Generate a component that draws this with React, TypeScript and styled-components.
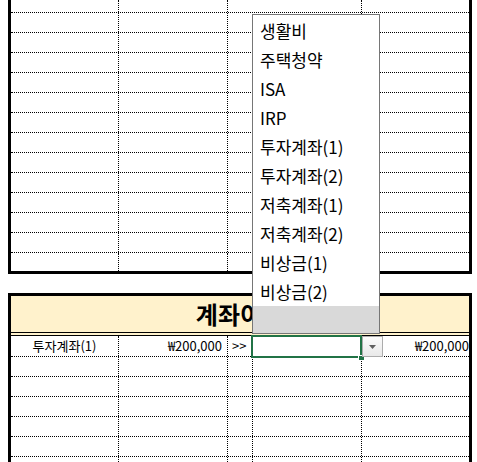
import React from 'react';
import styled, { createGlobalStyle } from 'styled-components';

const GlobalStyle = createGlobalStyle`
    html, body {
        margin: 0;
        padding: 0;
        background: #fff;
    }
    body {
        font-family: "Noto Sans CJK KR", "Noto Sans", sans-serif;
        color: #000;
    }
`;

// Sheet area
const Sheet = styled.div`
    position: relative;
    width: 477px;
    height: 462px;
    overflow: hidden;
    padding-left: 8px;
    box-sizing: border-box;
`;

const Table = styled.div<{ $closedTop?: boolean; $closedBottom?: boolean }>`
    width: 464px;
    box-sizing: border-box;
    border-left: 3px solid #000;
    border-right: 3px solid #000;
    border-top: ${p => (p.$closedTop ? '3px solid #000' : 'none')};
    border-bottom: ${p => (p.$closedBottom ? '3px solid #000' : 'none')};
`;

const Gap = styled.div`
    height: 19px;
`;

const Row = styled.div<{ $cols: string; $h?: number; $noLine?: boolean }>`
    display: grid;
    grid-template-columns: ${p => p.$cols};
    height: ${p => p.$h ?? 20}px;
    box-sizing: border-box;
    border-bottom: ${p => (p.$noLine ? 'none' : '1px dotted #000')};
`;

const Cell = styled.div<{ $align?: 'left' | 'center' | 'right'; $pad?: number }>`
    border-right: 1px dotted #000;
    font-size: 13px;
    line-height: 19px;
    white-space: nowrap;
    overflow: hidden;
    text-align: ${p => p.$align ?? 'left'};
    padding: 0 ${p => (p.$align === 'right' ? p.$pad ?? 5 : 0)}px 0 ${p => (p.$align === 'left' ? p.$pad ?? 4 : 0)}px;

    &:last-child {
        border-right: none;
    }
`;

const Header = styled.div`
    height: 40px;
    box-sizing: border-box;
    background: #fff2cc;
    border-bottom: 4px double #000;
    display: flex;
    align-items: center;
    justify-content: center;
    font-size: 24px;
    font-weight: 700;
    line-height: 36px;
`;

// Overlays (selection, list button, list)
const Selection = styled.div`
    position: absolute;
    left: 251px;
    top: 335px;
    width: 111px;
    height: 23px;
    box-sizing: border-box;
    border: 2px solid #217346;

    &::after {
        content: '';
        position: absolute;
        right: -4px;
        bottom: -4px;
        width: 5px;
        height: 4px;
        background: #217346;
        border-left: 1px solid #fff;
        border-top: 1px solid #fff;
    }
`;

const ListButton = styled.div`
    position: absolute;
    left: 362px;
    top: 336px;
    width: 21px;
    height: 21px;
    box-sizing: border-box;
    border: 1px solid #acacac;
    background: linear-gradient(#fbfbfb, #e9e9e9);
    display: flex;
    align-items: center;
    justify-content: center;
`;

const ListBox = styled.div`
    position: absolute;
    left: 252px;
    top: 14px;
    width: 128px;
    height: 320px;
    box-sizing: border-box;
    border: 1px solid #767676;
    background: #fff;
    padding-top: 1px;
    z-index: 2;
`;

const ListItem = styled.div<{ $active?: boolean }>`
    height: ${p => (p.$active ? 27 : 29)}px;
    line-height: 29px;
    padding-left: 7px;
    font-size: 17px;
    white-space: nowrap;
    background: ${p => (p.$active ? '#d9d9d9' : 'transparent')};
`;

const TOP_COLS = '108px 109px 134px 1fr';
const BOTTOM_COLS = '108px 109px 25px 109px 1fr';

const options = [
    '생활비',
    '주택청약',
    'ISA',
    'IRP',
    '투자계좌(1)',
    '투자계좌(2)',
    '저축계좌(1)',
    '저축계좌(2)',
    '비상금(1)',
    '비상금(2)',
];

const EmptyTopRow: React.FC<{ h?: number; noLine?: boolean }> = ({ h, noLine }) => (
    <Row $cols={TOP_COLS} $h={h} $noLine={noLine}>
        <Cell />
        <Cell />
        <Cell />
        <Cell />
    </Row>
);

const EmptyBottomRow: React.FC = () => (
    <Row $cols={BOTTOM_COLS}>
        <Cell />
        <Cell />
        <Cell />
        <Cell />
        <Cell />
    </Row>
);

export default function App() {
    return (
        <>
            <GlobalStyle />
            <Sheet>
                <Table $closedBottom>
                    <EmptyTopRow h={13} />
                    {Array.from({ length: 12 }).map((_, i) => (
                        <EmptyTopRow key={i} />
                    ))}
                    <EmptyTopRow h={18} noLine />
                </Table>

                <Gap />

                <Table $closedTop>
                    <Header>계좌이체</Header>
                    <Row $cols={BOTTOM_COLS} $h={21}>
                        <Cell $align="center">투자계좌(1)</Cell>
                        <Cell $align="right" $pad={5}>₩200,000</Cell>
                        <Cell $align="left" $pad={4}>&gt;&gt;</Cell>
                        <Cell />
                        <Cell $align="right" $pad={0}>₩200,000</Cell>
                    </Row>
                    {Array.from({ length: 6 }).map((_, i) => (
                        <EmptyBottomRow key={i} />
                    ))}
                </Table>

                <Selection />
                <ListButton>
                    <svg width="7" height="4" viewBox="0 0 7 4">
                        <polygon points="0,0 7,0 3.5,4" fill="#5f5f5f" />
                    </svg>
                </ListButton>

                <ListBox>
                    {options.map(o => (
                        <ListItem key={o}>{o}</ListItem>
                    ))}
                    <ListItem $active />
                </ListBox>
            </Sheet>
        </>
    );
}
